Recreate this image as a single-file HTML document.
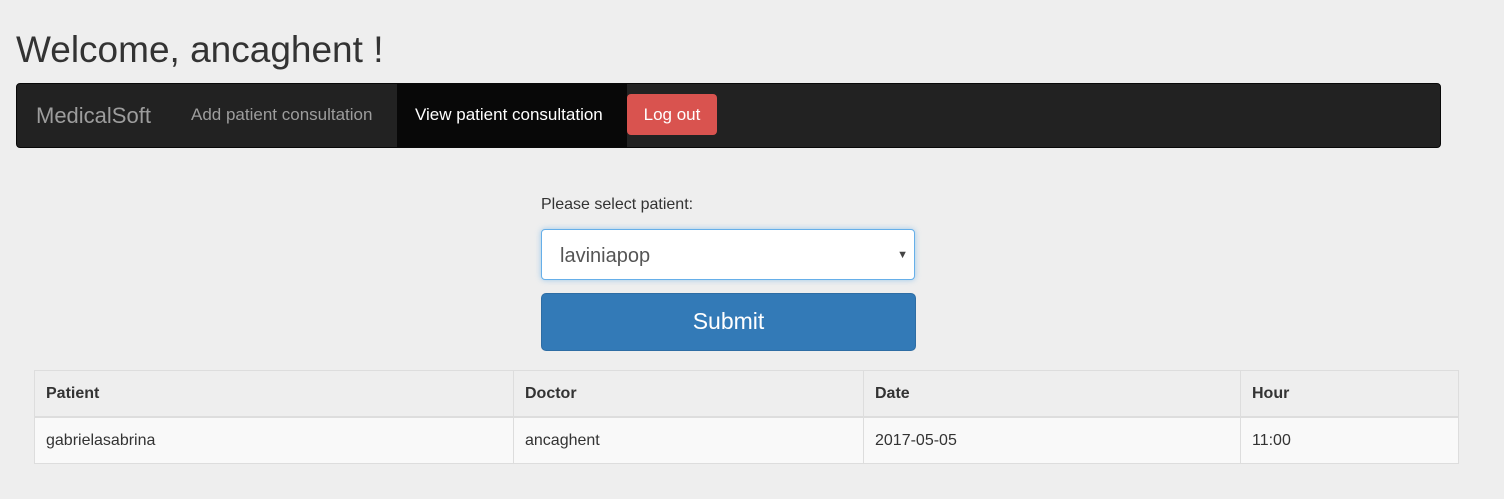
<!DOCTYPE html>
<html><head><style>
body{margin:0;width:1504px;height:499px;background:#eeeeee;font-family:"Liberation Sans",Arial,sans-serif;color:#333;position:relative;overflow:hidden}
.a{position:absolute}
h1{position:absolute;left:16px;top:28px;margin:0;font-size:37px;font-weight:normal;color:#333;line-height:44px}
.nav{left:16px;top:83px;width:1423px;height:63px;background:#222;border:1px solid #080808;border-radius:4px}
.nav span{position:absolute;font-size:17px;line-height:20px}
table{position:absolute;left:34px;top:370px;width:1425px;border-collapse:collapse;font-size:16px}
td,th{border:1px solid #ddd;padding:0 11px;text-align:left;height:45px}
th{border-bottom:2px solid #ddd;font-weight:bold}
tr.r td{background:#f9f9f9}
</style></head><body>
<h1>Welcome, ancaghent !</h1>
<div class="a nav">
<span style="left:19px;top:20px;font-size:22px;color:#9d9d9d;line-height:24px">MedicalSoft</span>
<span style="left:174px;top:21px;color:#9d9d9d">Add patient consultation</span>
<div class="a" style="left:380px;top:0;width:230px;height:63px;background:#080808"></div>
<span style="left:398px;top:21px;color:#fff">View patient consultation</span>
<div class="a" style="left:610px;top:10px;width:90px;height:41px;background:#d9534f;border-radius:4px;color:#fff;font-size:17px;line-height:41px;text-align:center">Log out</div>
</div>
<div class="a" style="left:541px;top:196px;font-size:16px">Please select patient:</div>
<div class="a" style="left:541px;top:229px;width:372px;height:49px;background:#fff;border:1px solid #66afe9;border-radius:4px;box-shadow:0 0 6px rgba(102,175,233,.6)">
<span class="a" style="left:18px;top:15px;font-size:20px;color:#555">laviniapop</span>
<span class="a" style="right:6px;top:19px;font-size:11px;color:#444">▼</span>
</div>
<div class="a" style="left:541px;top:293px;width:373px;height:56px;background:#337ab7;border:1px solid #2e6da4;border-radius:5px;color:#fff;font-size:23px;line-height:54px;text-align:center">Submit</div>
<table>
<tr><th style="width:456px">Patient</th><th style="width:327px">Doctor</th><th style="width:354px">Date</th><th>Hour</th></tr>
<tr class="r"><td>gabrielasabrina</td><td>ancaghent</td><td>2017-05-05</td><td>11:00</td></tr>
</table>
</body></html>
